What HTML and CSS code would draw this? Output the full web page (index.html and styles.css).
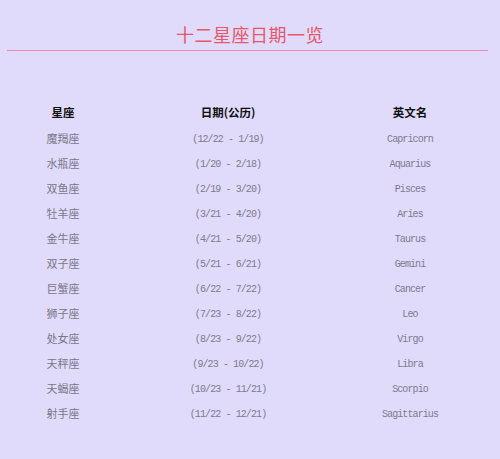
FILE: index.html
```html
<!DOCTYPE html>
<html lang="zh-CN">
<head>
<meta charset="utf-8">
<title>十二星座日期一览</title>
<link rel="stylesheet" href="styles.css">
</head>
<body>
<div class="page">
  <h1 class="title">十二星座日期一览</h1>
  <div class="rule"></div>
  <div class="table">
    <div class="row head"><span>星座</span><span>日期(公历)</span><span>英文名</span></div>
    <div class="row"><span class="cn">魔羯座</span><span class="mono">(12/22 - 1/19)</span><span class="mono">Capricorn</span></div>
    <div class="row"><span class="cn">水瓶座</span><span class="mono">(1/20 - 2/18)</span><span class="mono">Aquarius</span></div>
    <div class="row"><span class="cn">双鱼座</span><span class="mono">(2/19 - 3/20)</span><span class="mono">Pisces</span></div>
    <div class="row"><span class="cn">牡羊座</span><span class="mono">(3/21 - 4/20)</span><span class="mono">Aries</span></div>
    <div class="row"><span class="cn">金牛座</span><span class="mono">(4/21 - 5/20)</span><span class="mono">Taurus</span></div>
    <div class="row"><span class="cn">双子座</span><span class="mono">(5/21 - 6/21)</span><span class="mono">Gemini</span></div>
    <div class="row"><span class="cn">巨蟹座</span><span class="mono">(6/22 - 7/22)</span><span class="mono">Cancer</span></div>
    <div class="row"><span class="cn">狮子座</span><span class="mono">(7/23 - 8/22)</span><span class="mono">Leo</span></div>
    <div class="row"><span class="cn">处女座</span><span class="mono">(8/23 - 9/22)</span><span class="mono">Virgo</span></div>
    <div class="row"><span class="cn">天秤座</span><span class="mono">(9/23 - 10/22)</span><span class="mono">Libra</span></div>
    <div class="row"><span class="cn">天蝎座</span><span class="mono">(10/23 - 11/21)</span><span class="mono">Scorpio</span></div>
    <div class="row"><span class="cn">射手座</span><span class="mono">(11/22 - 12/21)</span><span class="mono">Sagittarius</span></div>
  </div>
</div>
</body>
</html>
```
FILE: styles.css
```css
html, body {
  margin: 0;
  padding: 0;
  background: #e0dbfb;
}
body {
  font-family: "Noto Sans CJK SC", "Liberation Serif", serif;
  width: 500px;
  height: 459px;
  overflow: hidden;
}
.page {
  padding-top: 23px;
}
.title {
  margin: 0;
  text-align: center;
  font-size: 18px;
  line-height: 22px;
  font-weight: normal;
  color: #e8566a;
  letter-spacing: 0.5px;
}
.rule {
  margin: 5px 12px 0 7px;
  height: 1px;
  background: #f08ab0;
}
.table {
  margin-top: 47px;
  display: flex;
  flex-direction: column;
}
.row {
  display: grid;
  grid-template-columns: 126px 204px 160px;
  height: 25px;
  align-items: center;
  text-align: center;
}
.row.head {
  height: 27px;
  font-size: 11.5px;
  font-weight: bold;
  color: #111;
}
.cn {
  font-size: 11px;
  color: #7a7688;
}
.mono {
  font-family: "Liberation Mono", "DejaVu Sans Mono", monospace;
  font-size: 10px;
  letter-spacing: -0.9px;
  padding-top: 3px;
  color: #7e7a8e;
}
```
